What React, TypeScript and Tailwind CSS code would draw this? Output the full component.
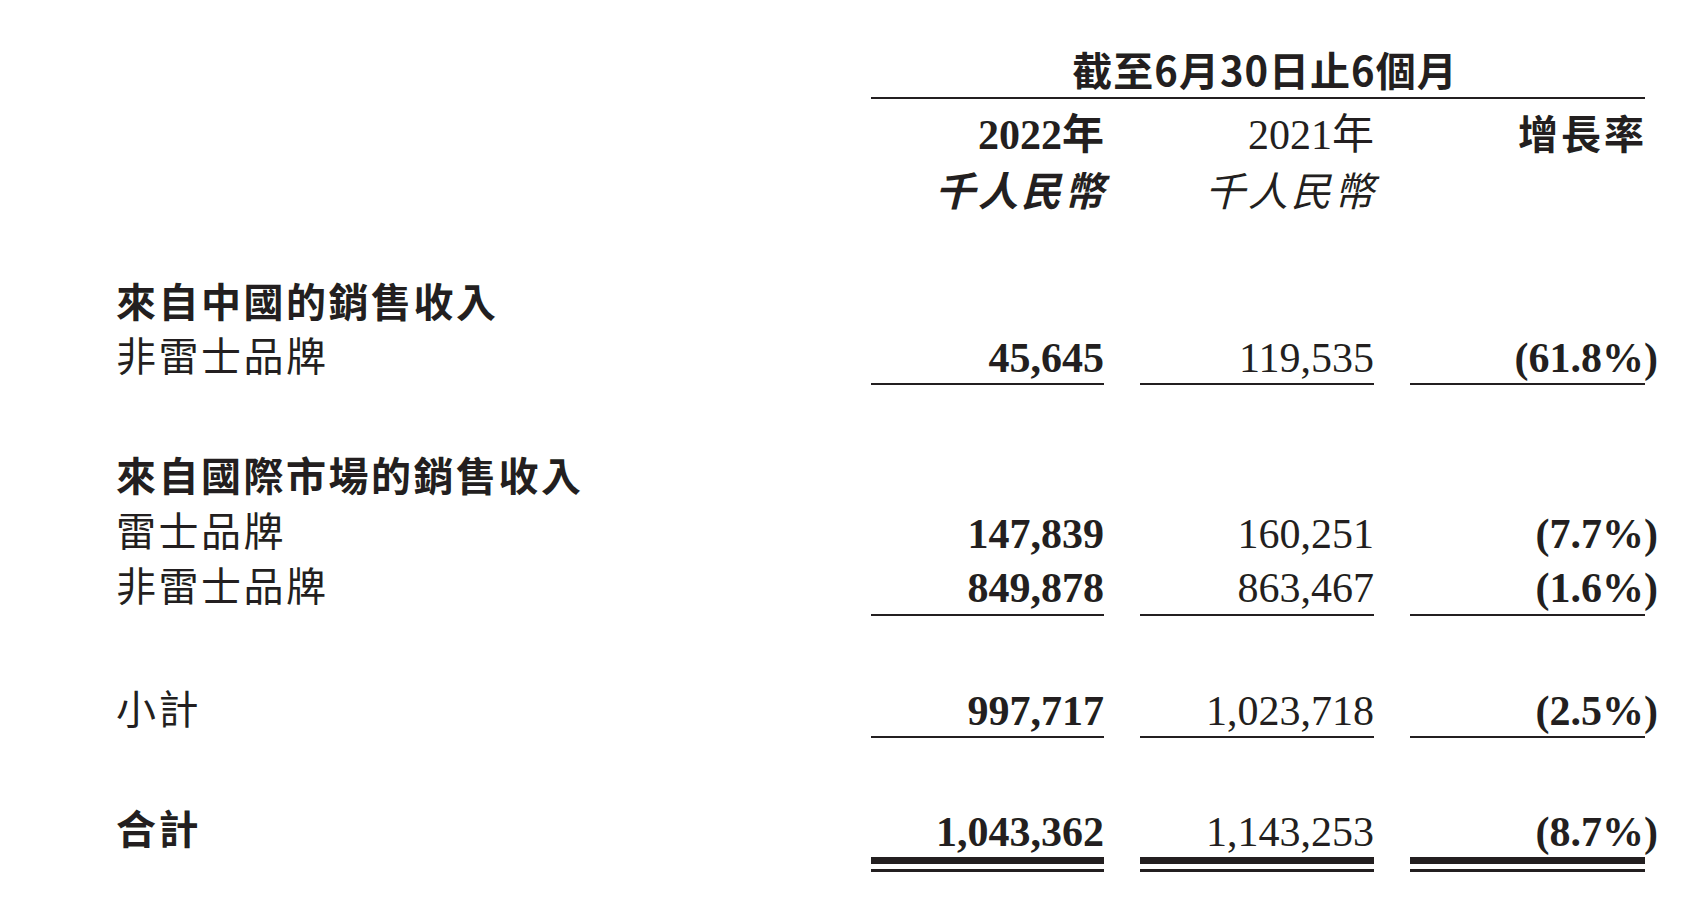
import React from "react";

const grid = "grid grid-cols-[1fr_233px_234px_235px] gap-x-[36px]";
const serif = "font-['Liberation_Serif','Noto_Sans_CJK_TC',serif]";
const hei = "font-['Noto_Sans_CJK_TC','Noto_Sans_CJK_SC',sans-serif]";

type Row = {
    label: string;
    heading?: boolean;
    cur?: string;
    prev?: string;
    pct?: string;
    line?: "single" | "double";
    box: string;
};

const rows: Row[] = [
    { label: "來自中國的銷售收入", heading: true, box: "mt-[56px] h-[55px]" },
    { label: "非雷士品牌", cur: "45,645", prev: "119,535", pct: "(61.8%)", line: "single", box: "h-[53px]" },
    { label: "來自國際市場的銷售收入", heading: true, box: "mt-[66px] h-[55px]" },
    { label: "雷士品牌", cur: "147,839", prev: "160,251", pct: "(7.7%)", box: "h-[55px]" },
    { label: "非雷士品牌", cur: "849,878", prev: "863,467", pct: "(1.6%)", line: "single", box: "h-[55px]" },
    { label: "小計", cur: "997,717", prev: "1,023,718", pct: "(2.5%)", line: "single", box: "mt-[69px] h-[53px]" },
    { label: "合計", heading: true, cur: "1,043,362", prev: "1,143,253", pct: "(8.7%)", line: "double", box: "mt-[69px]" },
];

function Pct({ v }: { v: string }) {
    return (
        <span>
            {v.slice(0, -1)}
            <span className="-mr-[13px]">)</span>
        </span>
    );
}

function Cell({ row, children, weight }: { row: Row; children: React.ReactNode; weight: string }) {
    const text = `${serif} ${weight} text-[42px] leading-none`;
    if (row.line === "double") {
        return (
            <div className="flex flex-col">
                <div className={`h-[50px] flex items-center justify-end ${text}`}>{children}</div>
                <div className="h-[7px] bg-[#231f20]" />
                <div className="mt-[5px] h-[3px] bg-[#231f20]" />
            </div>
        );
    }
    return (
        <div
            className={`h-full flex items-center justify-end ${text} ${
                row.line === "single" ? "border-b-2 border-[#231f20]" : ""
            }`}
        >
            {children}
        </div>
    );
}

export default function App() {
    return (
        <div className="w-[1702px] h-[902px] bg-white text-[#231f20] pl-[116px] pr-[57px] overflow-hidden">
            {/* period title */}
            <div className={`${grid} mt-[44px] h-[55px]`}>
                <div />
                <div
                    className={`col-span-3 flex items-center justify-center pb-[4px] pl-[14px] border-b-2 border-[#231f20] ${hei} font-bold text-[40px] tracking-[1px] leading-none`}
                >
                    截至6月30日止6個月
                </div>
            </div>

            {/* column headers */}
            <div className={grid}>
                <div />
                <div className="flex flex-col items-end pt-[8px]">
                    <div className={`h-[56px] flex items-center ${serif} font-bold text-[42px] leading-none`}>2022年</div>
                    <div
                        className={`h-[58px] flex items-center pb-[6px] ${hei} font-bold italic text-[40px] tracking-[3px] -mr-[3px] leading-none`}
                    >
                        千人民幣
                    </div>
                </div>
                <div className="flex flex-col items-end pt-[8px]">
                    <div className={`h-[56px] flex items-center ${serif} text-[42px] leading-none`}>2021年</div>
                    <div
                        className={`h-[58px] flex items-center pb-[6px] ${hei} italic text-[40px] tracking-[3px] -mr-[3px] leading-none`}
                    >
                        千人民幣
                    </div>
                </div>
                <div className="flex flex-col items-end pt-[8px]">
                    <div
                        className={`h-[56px] flex items-center pb-[6px] ${hei} font-bold text-[40px] tracking-[3px] -mr-[2px] leading-none`}
                    >
                        增長率
                    </div>
                </div>
            </div>

            {rows.map((row, i) => (
                <div key={i} className={`${grid} ${row.box}`}>
                    <div
                        className={`flex items-center pb-[10px] ${hei} text-[40px] tracking-[2.5px] leading-none ${
                            row.heading ? "font-bold" : "font-normal"
                        } ${row.line === "double" ? "h-[50px]" : ""}`}
                    >
                        {row.label}
                    </div>
                    {row.cur ? (
                        <>
                            <Cell row={row} weight="font-bold">{row.cur}</Cell>
                            <Cell row={row} weight="font-normal">{row.prev}</Cell>
                            <Cell row={row} weight="font-bold">
                                <Pct v={row.pct!} />
                            </Cell>
                        </>
                    ) : (
                        <>
                            <div />
                            <div />
                            <div />
                        </>
                    )}
                </div>
            ))}
        </div>
    );
}
